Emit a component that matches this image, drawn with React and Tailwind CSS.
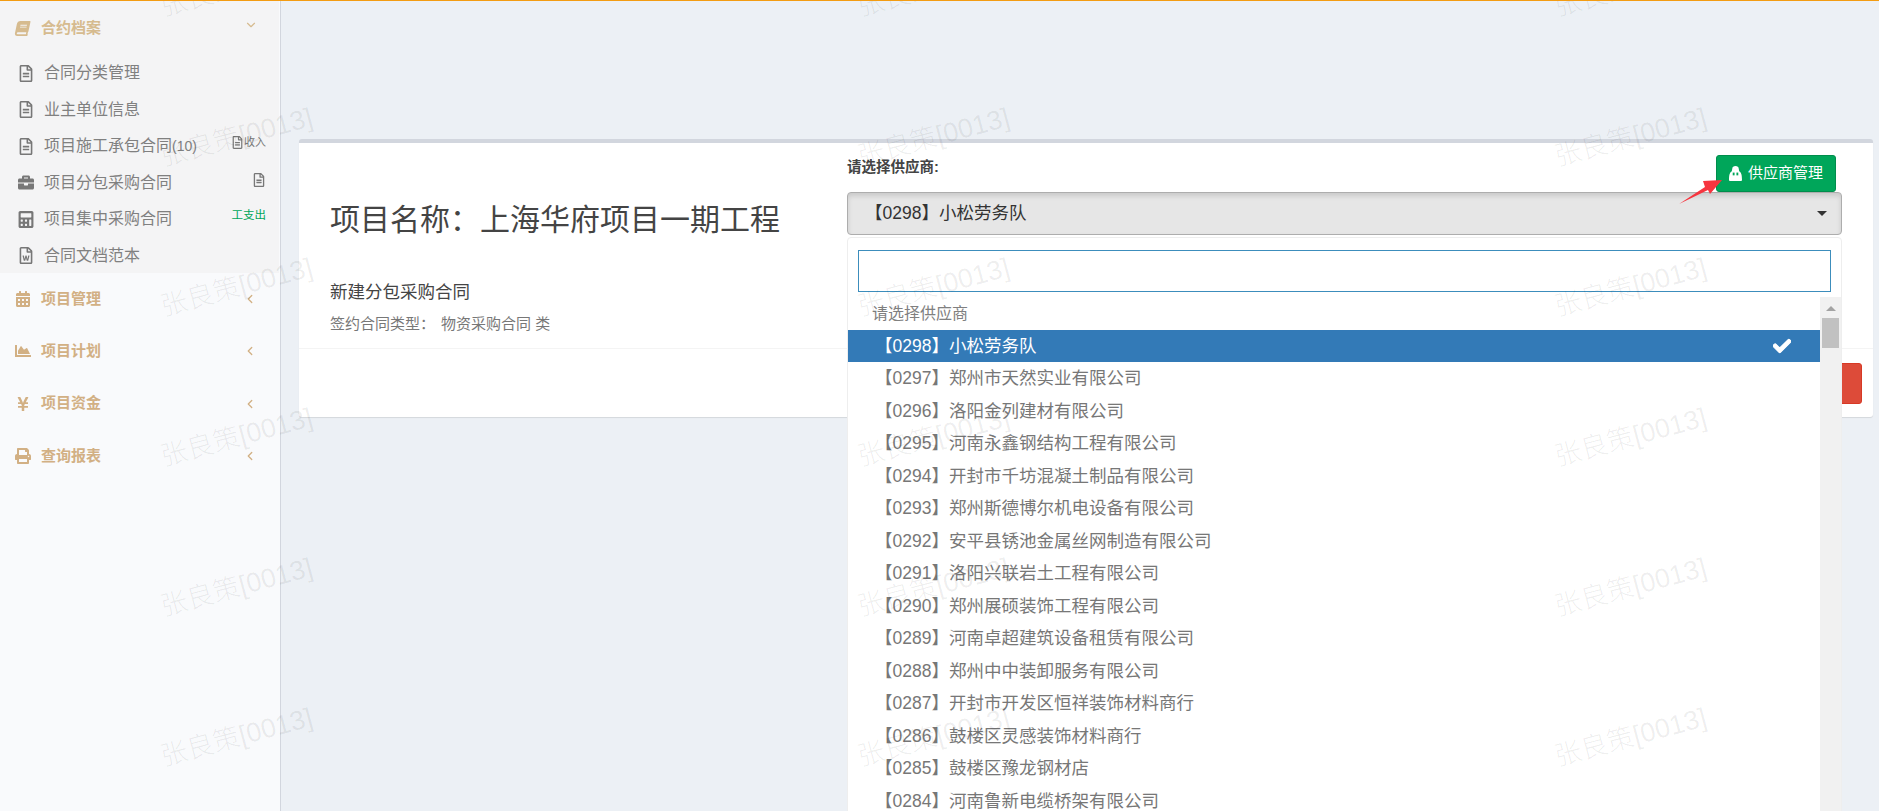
import { FaBook, FaBriefcase, FaCalculator, FaCalendarAlt, FaChartArea, FaCheck, FaPrint, FaRegFileAlt, FaRegFileWord, FaYenSign } from "react-icons/fa";
import { ChevronDown, ChevronLeft } from "lucide-react";

const subMenu = [
  { icon: FaRegFileAlt, label: "合同分类管理" },
  { icon: FaRegFileAlt, label: "业主单位信息" },
  { icon: FaRegFileAlt, label: "项目施工承包合同", count: "(10)", badge: "income" },
  { icon: FaBriefcase, label: "项目分包采购合同", badge: "file" },
  { icon: FaCalculator, label: "项目集中采购合同", badge: "expense" },
  { icon: FaRegFileWord, label: "合同文档范本" },
];

const mainMenu = [
  { icon: FaCalendarAlt, label: "项目管理" },
  { icon: FaChartArea, label: "项目计划" },
  { icon: FaYenSign, label: "项目资金" },
  { icon: FaPrint, label: "查询报表" },
];

const suppliers = [
  "【0297】郑州市天然实业有限公司",
  "【0296】洛阳金列建材有限公司",
  "【0295】河南永鑫钢结构工程有限公司",
  "【0294】开封市千坊混凝土制品有限公司",
  "【0293】郑州斯德博尔机电设备有限公司",
  "【0292】安平县锈池金属丝网制造有限公司",
  "【0291】洛阳兴联岩土工程有限公司",
  "【0290】郑州展硕装饰工程有限公司",
  "【0289】河南卓超建筑设备租赁有限公司",
  "【0288】郑州中中装卸服务有限公司",
  "【0287】开封市开发区恒祥装饰材料商行",
  "【0286】鼓楼区灵感装饰材料商行",
  "【0285】鼓楼区豫龙钢材店",
  "【0284】河南鲁新电缆桥架有限公司",
];

function SubBadge({ type }) {
  if (type === "income") {
    return (
      <span className="ml-auto mb-[8px] flex items-center text-[11px] text-[#777]">
        <FaRegFileAlt className="text-[13px]" />
        收入
      </span>
    );
  }
  if (type === "file") {
    return <FaRegFileAlt className="ml-auto mb-[6px] text-[14px] text-[#777]" />;
  }
  return <span className="ml-auto mb-[8px] text-[11.5px] text-[#00a65a]">工支出</span>;
}

function Sidebar() {
  return (
    <aside className="w-[281px] shrink-0 border-r border-[#d2d6de] bg-[#f9fafc]">
      <div className="h-[272px] w-[279px] bg-[#f4f4f5]">
        <div className="flex h-[54px] items-center pl-[15px] pr-[21px] text-[15px] font-bold text-[#d6bb8f]">
          <FaBook className="w-[15px] shrink-0 -skew-x-12 text-[15px]" />
          <span className="ml-[11px]">合约档案</span>
          <ChevronDown size={14} strokeWidth={2} className="ml-auto mb-[6px]" />
        </div>
        {subMenu.map((item) => (
          <div key={item.label} className="flex h-[36.5px] items-center pl-[18px] pr-[13px] text-[16px] text-[#808080]">
            <item.icon className="w-[16px] shrink-0 text-[17px] text-[#777]" />
            <span className="ml-[10px]">{item.label}</span>
            {item.count && <span className="text-[14px]">{item.count}</span>}
            {item.badge && <SubBadge type={item.badge} />}
          </div>
        ))}
      </div>
      {mainMenu.map((item) => (
        <div key={item.label} className="flex h-[52.3px] items-center pl-[15px] pr-[23px] text-[15px] font-bold text-[#d2b084]">
          <item.icon className="w-[16px] shrink-0 text-[16px]" />
          <span className="ml-[10px]">{item.label}</span>
          <ChevronLeft size={14} strokeWidth={2.25} className="ml-auto" />
        </div>
      ))}
    </aside>
  );
}

function SupplierDropdown() {
  return (
    <div className="absolute left-0 right-0 top-[45px] z-10 h-[600px] overflow-hidden rounded-[4px] border border-[#eeeeee] bg-white">
      <div className="px-[10px] pt-[12px]">
        <div className="h-[42px] border border-[#3c8dbc] bg-white"></div>
      </div>
      <div className="relative mt-[5px]">
        <div className="mr-[20px]">
          <div className="flex h-[33px] items-center pl-[24px] text-[16px] text-[#808080]">请选择供应商</div>
          <div className="flex h-[32px] items-center bg-[#337ab7] pl-[27px] pr-[30px] text-[17.5px] text-white">
            【0298】小松劳务队
            <FaCheck className="ml-auto stroke-current stroke-[30px] text-[18px]" />
          </div>
          {suppliers.map((name) => (
            <div key={name} className="flex h-[32.5px] items-center pl-[27px] text-[17.5px] text-[#777]">
              {name}
            </div>
          ))}
        </div>
        <div className="absolute bottom-0 right-0 top-0 w-[21px] bg-[#f1f1f1] px-[2px]">
          <div className="mx-auto mt-[9px] h-0 w-0 border-x-[5px] border-b-[5px] border-x-transparent border-b-[#a3a3a3]"></div>
          <div className="mt-[7px] h-[30px] bg-[#c1c1c1]"></div>
        </div>
      </div>
    </div>
  );
}

function Watermarks() {
  const marks = Array.from({ length: 21 });
  return (
    <div className="pointer-events-none absolute -left-[112px] -top-[89px] z-20 grid grid-cols-[repeat(3,697px)] auto-rows-[150px]">
      {marks.map((_, i) => (
        <div key={i} className="flex -rotate-[15deg] items-center justify-center whitespace-nowrap text-[27px] font-light text-black/[0.07]">
          张良策[0013]
        </div>
      ))}
    </div>
  );
}

export default function App() {
  return (
    <div className="relative flex h-[811px] w-[1879px] overflow-hidden border-t border-[#f39c12] bg-[#ecf0f5] font-['Liberation_Sans','Noto_Sans_CJK_SC',sans-serif]">
      <Sidebar />
      <main className="flex-1 pl-[18px] pr-[6px] pt-[138px]">
        <section className="h-[278px] rounded-[3px] border-t-[4px] border-[#d2d6de] bg-white shadow-[0_1px_1px_rgba(0,0,0,0.1)]">
          <div className="flex h-[206px] border-b border-[#f4f4f4] pl-[31px] pr-[31px]">
            <div className="w-[517px] shrink-0">
              <h1 className="mt-[58px] text-[30px] leading-[38px] text-[#444]">项目名称：上海华府项目一期工程</h1>
              <p className="mt-[41px] text-[17.5px] leading-[24px] text-[#444]">新建分包采购合同</p>
              <p className="mt-[10px] flex text-[15px] leading-[20px] text-[#777]">
                <span className="w-[111px]">签约合同类型：</span>
                <span>物资采购合同 类</span>
              </p>
            </div>
            <div className="flex-1 pt-[12px]">
              <div className="flex items-start justify-between pr-[6px]">
                <label className="mt-[2px] text-[14.5px] font-bold leading-[20px] text-[#444]">请选择供应商:</label>
                <button type="button" className="flex h-[37px] w-[120px] items-center justify-center gap-[6px] rounded-[3px] border border-[#008d4c] bg-[#00a65a] text-[15px] text-white">
                  <svg viewBox="0 0 14 16" className="h-[15px] w-[13px]" fill="currentColor">
                    <path d="M3.5 3 C3.5 1 5 0 7 0 C9 0 10.5 1 10.5 3 L11 5.5 C13 6.5 14 9 14 15 C14 15.6 13.6 16 13 16 L1 16 C0.4 16 0 15.6 0 15 C0 9 1 6.5 3 5.5 Z" />
                    <rect x="4" y="7" width="2" height="3" fill="#00a65a" />
                    <rect x="8" y="7" width="2" height="3" fill="#00a65a" />
                  </svg>
                  供应商管理
                </button>
              </div>
              <div className="relative">
                <div className="flex h-[43px] items-center rounded-[4px] border border-[#adadad] bg-[#e6e6e6] pl-[17px] pr-[14px] text-[17.5px] text-[#333] shadow-[inset_0_3px_5px_rgba(0,0,0,0.125)]">
                  【0298】小松劳务队
                  <span className="ml-auto h-0 w-0 border-x-[5px] border-t-[5px] border-x-transparent border-t-[#333]"></span>
                </div>
                <SupplierDropdown />
              </div>
            </div>
          </div>
          <div className="flex justify-end pr-[11px] pt-[14px]">
            <div className="h-[41px] w-[90px] rounded-[3px] border border-[#d73925] bg-[#dd4b39]"></div>
          </div>
        </section>
      </main>
      <svg viewBox="0 0 50 30" className="absolute left-[1675px] top-[174px] z-10 h-[30px] w-[50px]" fill="#f6353f">
        <path d="M4 29 L30 12 L28 6 L47 5 L35 19 L33 15 Z" />
      </svg>
      <Watermarks />
    </div>
  );
}
